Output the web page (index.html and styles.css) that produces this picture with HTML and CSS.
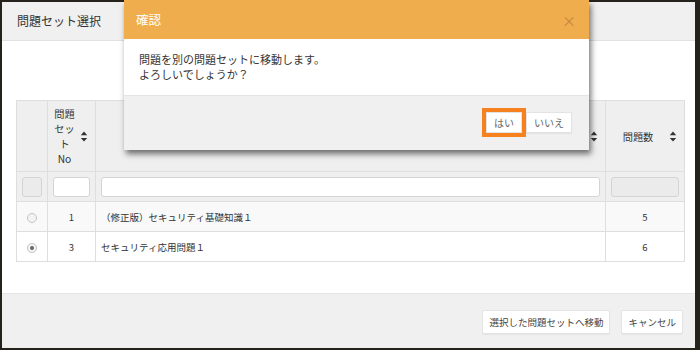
FILE: index.html
```html
<!DOCTYPE html>
<html>
<head>
    <title>問題セット選択</title>
    <meta charset="utf-8">
    <link rel="stylesheet" href="styles.css">
</head>
<body>
    <div class="modal">
        <div class="modal-header">問題セット選択</div>

        <div class="modal-body">
            <table class="sets">
                <colgroup>
                    <col class="c-radio">
                    <col class="c-no">
                    <col class="c-name">
                    <col class="c-count">
                </colgroup>
                <thead>
                    <tr class="head">
                        <th></th>
                        <th>
                            <div class="th-in">
                                <span class="th-label">問題<br>セッ<br>ト<br>No</span>
                                <svg class="sort" viewBox="0 0 8 12"><path d="M4 0.5 L7.5 4.5 H0.5 Z M4 11.5 L7.5 7.5 H0.5 Z"/></svg>
                            </div>
                        </th>
                        <th>
                            <div class="th-in">
                                <span class="th-label"></span>
                                <svg class="sort" viewBox="0 0 8 12"><path d="M4 0.5 L7.5 4.5 H0.5 Z M4 11.5 L7.5 7.5 H0.5 Z"/></svg>
                            </div>
                        </th>
                        <th>
                            <div class="th-in">
                                <span class="th-label">問題数</span>
                                <svg class="sort" viewBox="0 0 8 12"><path d="M4 0.5 L7.5 4.5 H0.5 Z M4 11.5 L7.5 7.5 H0.5 Z"/></svg>
                            </div>
                        </th>
                    </tr>
                    <tr class="filter">
                        <td><div class="box disabled small"></div></td>
                        <td><div class="box"></div></td>
                        <td><div class="box"></div></td>
                        <td><div class="box disabled"></div></td>
                    </tr>
                </thead>
                <tbody>
                    <tr class="odd">
                        <td class="center"><span class="radio"></span></td>
                        <td class="center">1</td>
                        <td>（修正版）セキュリティ基礎知識１</td>
                        <td class="center">5</td>
                    </tr>
                    <tr>
                        <td class="center"><span class="radio checked"></span></td>
                        <td class="center">3</td>
                        <td>セキュリティ応用問題１</td>
                        <td class="center">6</td>
                    </tr>
                </tbody>
            </table>
        </div>

        <div class="modal-footer">
            <button class="btn">選択した問題セットへ移動</button>
            <button class="btn">キャンセル</button>
        </div>
    </div>

    <div class="confirm">
        <div class="confirm-header">
            <span>確認</span>
            <span class="close">×</span>
        </div>
        <div class="confirm-body">
            <p>問題を別の問題セットに移動します。</p>
            <p>よろしいでしょうか？</p>
        </div>
        <div class="confirm-footer">
            <button class="btn small focus">はい</button>
            <button class="btn small">いいえ</button>
        </div>
    </div>
</body>
</html>
```

FILE: styles.css
```css
body {
    margin: 0;
    padding: 2px 0 0 2px;
    background-color: #24221a;
    font-family: "Noto Sans CJK JP", "Noto Sans", sans-serif;
    font-size: 11px;
    color: #333;
    width: 693px;
    height: 348px;
    overflow: hidden;
    position: relative;
}

.modal {
    width: 693px;
    height: 346px;
    background-color: white;
    display: flex;
    flex-direction: column;
}

.modal-header {
    height: 38px;
    line-height: 38px;
    padding-left: 15px;
    background-color: #f0f0f0;
    border-bottom: 1px solid #e2e2e2;
    font-size: 12px;
}

.modal-body {
    height: 252px;
    padding: 59px 0 0 14px;
    box-sizing: border-box;
}

.modal-footer {
    flex: 1;
    background-color: #f0f0f0;
    border-top: 1px solid #e6e6e6;
    display: flex;
    justify-content: flex-end;
    align-items: flex-start;
    gap: 11px;
    padding: 16px 12px 0 0;
}

.btn {
    font-family: inherit;
    font-size: 9.5px;
    color: #444;
    background-color: white;
    border: 1px solid #e3e3e3;
    border-radius: 2px;
    height: 24px;
    padding: 0 6px;
    box-shadow: 0 1px 1px rgba(0, 0, 0, 0.05);
}

/* table */
.sets {
    width: 669px;
    border-collapse: collapse;
    table-layout: fixed;
    font-size: 10.2px;
}

.c-radio { width: 31px; }
.c-no { width: 48px; }
.c-count { width: 79px; }

.sets th,
.sets td {
    border: 1px solid #dedede;
    padding: 0 5px;
    font-weight: normal;
}

.head th {
    height: 70px;
    background-color: #efefef;
}

.th-in {
    display: flex;
    align-items: center;
    justify-content: flex-end;
    gap: 4px;
}

.th-label {
    flex: 1;
    text-align: center;
    line-height: 15px;
    white-space: nowrap;
}

.sort {
    width: 8px;
    height: 11px;
    fill: #333;
    margin-right: 2px;
    flex: none;
}

.filter td {
    height: 29px;
    background-color: #efefef;
}

.box {
    height: 20px;
    background-color: white;
    border: 1px solid #d4d4d4;
    border-radius: 3px;
    box-sizing: border-box;
}

.box.disabled {
    background-color: #ebebeb;
}

.box.small {
    width: 20px;
}

tbody td {
    height: 29px;
    font-size: 9.5px;
}

tbody tr.odd td {
    background-color: #f9f9f9;
}

.center {
    text-align: center;
}

.radio {
    display: inline-block;
    width: 8px;
    height: 8px;
    border: 1px solid #c4c4c4;
    border-radius: 50%;
    background-color: #f4f4f4;
    vertical-align: middle;
    position: relative;
}

.radio.checked::after {
    content: "";
    position: absolute;
    left: 2px;
    top: 2px;
    width: 4px;
    height: 4px;
    border-radius: 50%;
    background-color: #666;
}

/* confirm dialog over the modal */
.confirm {
    position: absolute;
    left: 124px;
    top: 0;
    width: 465px;
    height: 150px;
    background-color: white;
    box-shadow: 2px 4px 6px rgba(0, 0, 0, 0.55);
    display: flex;
    flex-direction: column;
}

.confirm-header {
    height: 39px;
    background-color: #f0ad4e;
    color: white;
    font-size: 12.5px;
    display: flex;
    align-items: center;
    justify-content: space-between;
    padding: 0 13px 0 12px;
}

.close {
    color: #b07a36;
    font-size: 14px;
    opacity: 0.7;
}

.confirm-body {
    height: 56px;
    box-sizing: border-box;
    padding: 13px 0 0 15px;
}

.confirm-body p {
    margin: 0;
    line-height: 15px;
}

.confirm-footer {
    flex: 1;
    background-color: #f0f0f0;
    border-top: 1px solid #e4e4e4;
    display: flex;
    justify-content: flex-end;
    align-items: flex-start;
    padding: 16px 17px 0 0;
    gap: 4px;
}

.btn.small {
    height: 21px;
    font-size: 10px;
    color: #666;
    padding: 0 7px;
    border-radius: 0;
}

.btn.focus {
    outline: 4px solid #f5811f;
    outline-offset: 0;
}
```
